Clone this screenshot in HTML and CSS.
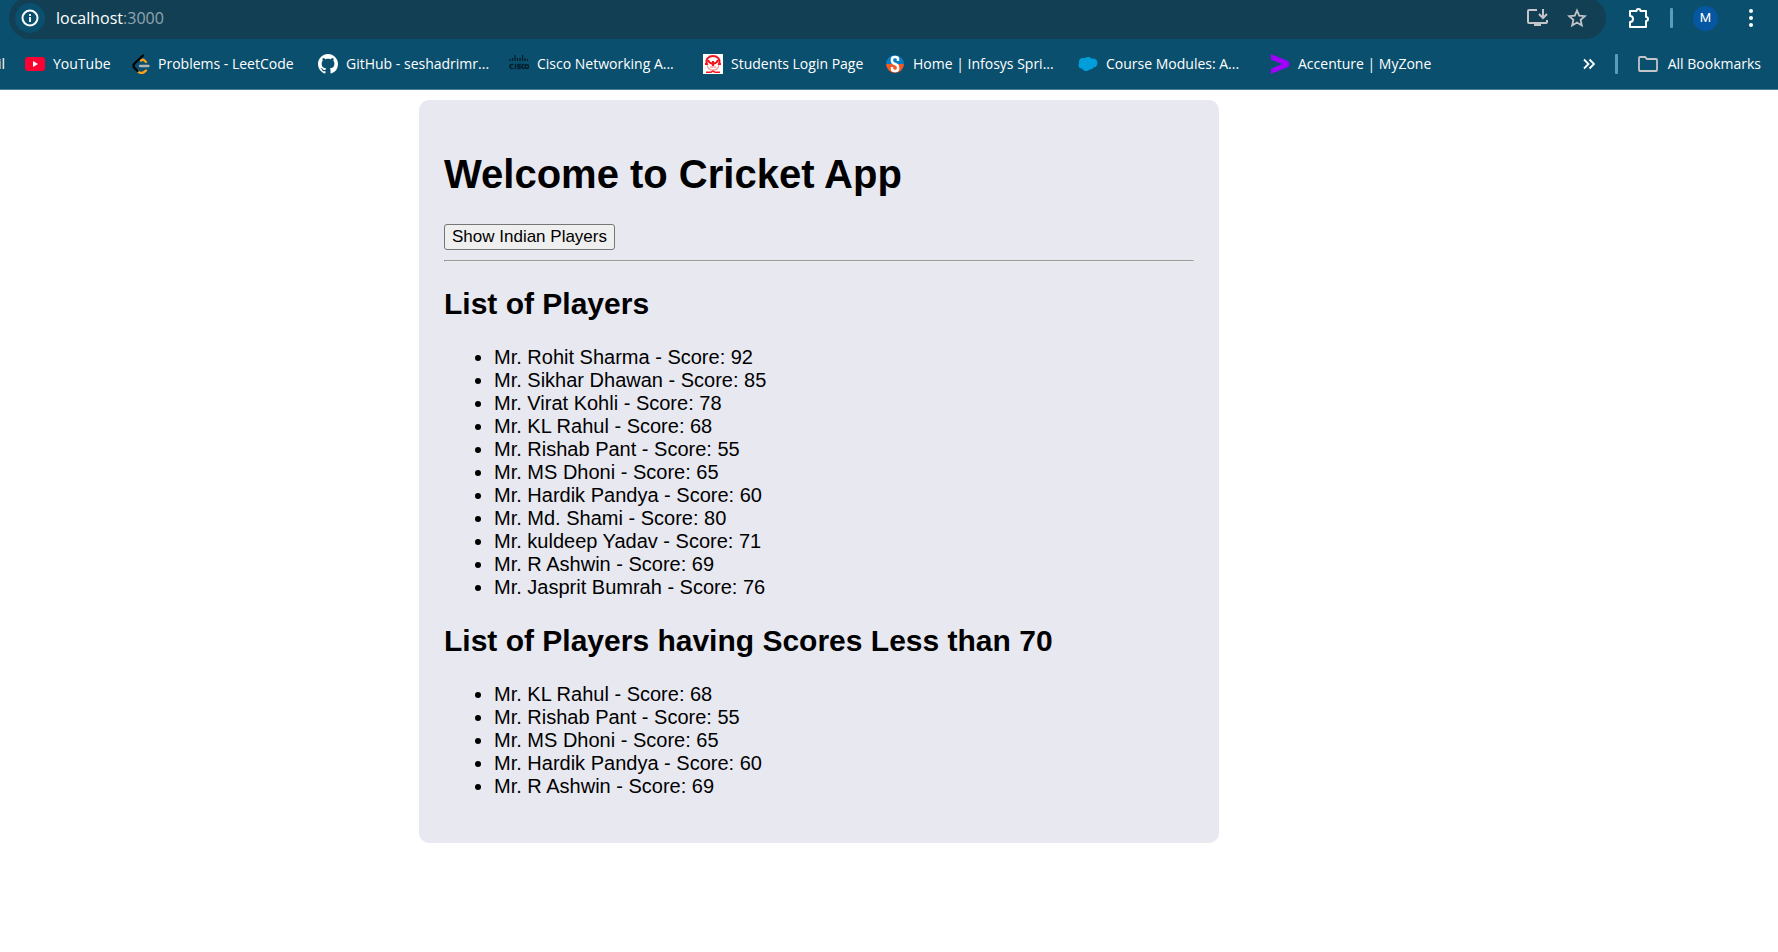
FILE: index.html
```html
<!DOCTYPE html>
<html lang="en">
<head>
<meta charset="utf-8">
<title>Cricket App</title>
<link rel="stylesheet" href="styles.css">
</head>
<body>
<header class="browser">
  <div class="toolbar">
    <div class="address">
      <button class="info" type="button" aria-label="View site information">
        <svg width="18" height="18" viewBox="0 0 18 18" fill="none" stroke="#fff" stroke-width="2"><circle cx="9" cy="9" r="7.5"/><path d="M9 8v5M9 5v2" stroke-width="1.8"/></svg>
      </button>
      <a class="url" href="#">localhost<span class="port">:3000</span></a>
      <button class="plain" type="button" aria-label="Install app">
        <svg width="22" height="20" viewBox="0 0 22 20" fill="none" stroke="#c3c5c8" stroke-width="2"><path d="M11 2H3Q2 2 2 3v11q0 1 1 1h17q1 0 1-1v-2M17 1v9M13 6l4 4 4-4"/><path d="M8 15h7v3H8z" fill="#c3c5c8" stroke="none"/></svg>
      </button>
      <button class="plain" type="button" aria-label="Bookmark this tab">
        <svg width="20" height="20" viewBox="0 0 20 20" fill="none" stroke="#c3c5c8" stroke-width="1.8"><path d="M10 2.5l2.2 5.2 5.6.5-4.2 3.7 1.2 5.5L10 14.500l-4.800 2.900 1.200-5.500L2.200 8.200l5.600-.5z"/></svg>
      </button>
    </div>
    <div class="actions">
      <button class="plain" type="button" aria-label="Extensions">
        <svg width="22" height="22" viewBox="0 0 22 22" fill="none" stroke="#fff" stroke-width="2"><path d="M2 4h6.500a2 2 0 0 1 4 0H18v6a2 2 0 0 1 0 4v6H2v-5a3 3 0 0 0 0-6z" stroke-linejoin="round"/></svg>
      </button>
      <span class="divider"></span>
      <button class="avatar" type="button">M</button>
      <button class="plain menu" type="button" aria-label="Menu">
        <svg width="6" height="20" viewBox="0 0 6 20" fill="#fff"><circle cx="3" cy="3" r="2"/><circle cx="3" cy="10" r="2"/><circle cx="3" cy="17" r="2"/></svg>
      </button>
    </div>
  </div>
  <nav class="bookmarks" aria-label="Bookmarks">
    <a class="cut" href="#">il</a>
    <div class="links">
    <a class="bookmark" href="#"><svg width="20" height="20" viewBox="0 0 20 20"><rect y="3" width="20" height="14" rx="3" fill="#ff0033"/><path d="M8 7l5 3-5 3z" fill="#fff"/></svg>YouTube</a>
    <a class="bookmark" href="#"><svg width="18" height="20" viewBox="0 0 18 20" fill="none" stroke-width="2.300" stroke-linecap="round"><path d="M14 16.500Q10 21 6 17.500" stroke="#ffa116"/><path d="M9 6.500q2-1.500 3.500 0L14 8" stroke="#ffa116"/><path d="M11 1.500L2.500 9.500q-2 2.500 0 4.500l3 3" stroke="#000"/><path d="M8 12H16.500" stroke="#b3b3b3"/></svg>Problems - LeetCode</a>
    <a class="bookmark" href="#"><svg width="20" height="20" viewBox="0 0 16 16" fill="#fff"><path d="M8 0C3.580 0 0 3.580 0 8c0 3.540 2.290 6.530 5.470 7.590.4.070.55-.17.55-.38 0-.19-.01-.82-.01-1.490-2.010.37-2.530-.49-2.690-.94-.09-.23-.48-.94-.82-1.130-.28-.15-.68-.52-.01-.53.63-.01 1.080.58 1.230.82.72 1.210 1.870.87 2.330.66.070-.52.28-.87.51-1.070-1.780-.2-3.640-.89-3.640-3.950 0-.87.31-1.590.82-2.150-.08-.2-.36-1.020.08-2.120 0 0 .67-.21 2.200.82.64-.18 1.320-.27 2-.27s1.360.09 2 .27c1.530-1.040 2.200-.82 2.200-.82.44 1.100.16 1.920.08 2.120.51.56.82 1.270.82 2.150 0 3.070-1.870 3.750-3.650 3.950.29.25.54.73.54 1.480 0 1.070-.01 1.930-.01 2.200 0 .21.15.46.55.38A8.010 8.010 0 0 0 16 8c0-4.420-3.580-8-8-8z"/></svg>GitHub - seshadrimr...</a>
    <a class="bookmark" href="#"><svg width="20" height="20" viewBox="0 0 20 20" fill="none" stroke="#04202f" stroke-width="1.300"><path d="M1 5v2M3.500 4v3M6 1v6M8.500 4v3M11 4v3M13.500 1v6M16 4v3M18.500 5v2"/><path d="M4.500 10.500H3Q1 10.500 1 12.500t2 2h1.500M6.500 10v5M12 10.500H9.500q-1.500 1 0 2h1q1.500 1 0 2H8M15.500 10.500h-1q-1.500 0-1.500 2t1.500 2h1" stroke-width="1.600"/><circle cx="17.800" cy="12.500" r="1.800" stroke-width="1.600"/></svg>Cisco Networking A...</a>
    <a class="bookmark" href="#"><svg width="20" height="20" viewBox="0 0 20 20"><path fill="#fff" d="M0 0h20v20H0z"/><g fill="none" stroke="#f01820"><path d="M2 10h2C2 5 6 2 10 2s8 3 6 8h2" stroke-width="2"/><path d="M5 6q1 3 4 3.500M15 6q-1 3-4 3.500M10 7v5" stroke-width="2.200"/><path d="M4 11q1 5 6 5t6-5M7 13h6" stroke="#f7a6a8" stroke-width="1.300"/><path d="M3 18.200h5l2-1 2 1h5" stroke-width="1.500"/></g></svg>Students Login Page</a>
    <a class="bookmark" href="#"><svg width="20" height="20" viewBox="0 0 20 20"><path d="M1 10a9 9 0 0 1 18 0z" fill="#087cc4"/><path d="M1 10a9 9 0 0 0 18 0z" fill="#f15a24"/><path d="M13 7V5q0-2-3-2T7 5v2q0 2 3 3t3 3v2q0 2-3 2t-3-2v-2" fill="none" stroke="#fff" stroke-width="2.500"/></svg>Home | Infosys Spri...</a>
    <a class="bookmark" href="#"><svg width="20" height="20" viewBox="0 0 20 20" fill="#009edb"><circle cx="5" cy="8" r="4"/><circle cx="10" cy="7" r="4"/><circle cx="15" cy="9" r="4.500"/><circle cx="4" cy="11" r="3.500"/><circle cx="8" cy="13" r="4"/><circle cx="12" cy="12" r="3.500"/></svg>Course Modules: A...</a>
    <a class="bookmark" href="#"><svg width="20" height="20" viewBox="0 0 20 20"><path d="M1 0l18 7.500v5L1 20v-5l11-5L1 5.500z" fill="#a100ff"/></svg>Accenture | MyZone</a>
    </div>
    <button class="plain" type="button" aria-label="More bookmarks">
      <svg width="12" height="12" viewBox="0 0 12 12" fill="none" stroke="#fff" stroke-width="1.800"><path d="M1 1.500L5.500 6 1 10.500M6.500 1.500L11 6l-4.500 4.500"/></svg>
    </button>
    <span class="divider"></span>
    <a class="bookmark all" href="#"><svg width="20" height="16" viewBox="0 0 20 16" fill="none" stroke="#c3c5c8" stroke-width="1.800"><path d="M2 1h5l2 2h9q1 0 1 1v10q0 1-1 1H2q-1 0-1-1V2q0-1 1-1z"/></svg>All Bookmarks</a>
  </nav>
</header>
<main class="page">
  <section class="card">
    <h1>Welcome to Cricket App</h1>
    <button class="toggle" type="button">Show Indian Players</button>
    <hr>
    <h2>List of Players</h2>
    <ul>
      <li>Mr. Rohit Sharma - Score: 92</li>
      <li>Mr. Sikhar Dhawan - Score: 85</li>
      <li>Mr. Virat Kohli - Score: 78</li>
      <li>Mr. KL Rahul - Score: 68</li>
      <li>Mr. Rishab Pant - Score: 55</li>
      <li>Mr. MS Dhoni - Score: 65</li>
      <li>Mr. Hardik Pandya - Score: 60</li>
      <li>Mr. Md. Shami - Score: 80</li>
      <li>Mr. kuldeep Yadav - Score: 71</li>
      <li>Mr. R Ashwin - Score: 69</li>
      <li>Mr. Jasprit Bumrah - Score: 76</li>
    </ul>
    <h2>List of Players having Scores Less than 70</h2>
    <ul>
      <li>Mr. KL Rahul - Score: 68</li>
      <li>Mr. Rishab Pant - Score: 55</li>
      <li>Mr. MS Dhoni - Score: 65</li>
      <li>Mr. Hardik Pandya - Score: 60</li>
      <li>Mr. R Ashwin - Score: 69</li>
    </ul>
  </section>
</main>
</body>
</html>
```

FILE: styles.css
```css
* { box-sizing: border-box; }
body {
  margin: 0;
  background: #fff;
  color: #000;
  font: 20px/23px "Liberation Sans", Arial, sans-serif;
}
svg { display: block; flex: none; }
a { color: inherit; text-decoration: none; }

.browser {
  overflow: hidden;
  background: #0a506e;
  border-bottom: 1px solid #4a7f96;
  color: #fff;
  font: 14px/20px "Open Sans", "Noto Sans", sans-serif;
}
.toolbar {
  display: flex;
  align-items: center;
  gap: 22px;
  height: 42px;
  margin-top: -3px;
  padding: 0 24px 0 9px;
}
.address {
  display: flex;
  flex: 1;
  align-items: center;
  gap: 19px;
  height: 42px;
  padding: 0 19px 0 6px;
  border-radius: 21px;
  background: #133f54;
}
.plain, .info, .avatar {
  display: grid;
  place-items: center;
  padding: 0;
  border: 0;
  background: none;
  color: inherit;
}
.info {
  width: 30px;
  height: 30px;
  border-radius: 50%;
  background: #0a506e;
}
.url { flex: 1; margin-left: -8px; font-size: 16px; }
.port { color: #91a6b0; }
.actions { display: flex; align-items: center; gap: 20px; }
.menu { padding-left: 10px; }
.divider { width: 3px; height: 20px; border-radius: 1px; background: #5b9cbc; }
.avatar {
  width: 25px;
  height: 25px;
  border-radius: 50%;
  background: #0657a2;
  font: 13px/20px Roboto, sans-serif;
}

.bookmarks {
  display: flex;
  align-items: center;
  height: 50px;
  padding-right: 17px;
  white-space: nowrap;
}
.cut { display: flex; justify-content: flex-end; width: 5px; margin-right: 20px; }
.links {
  display: grid;
  flex: 1;
  grid-template-columns: 107px 186px 191px 194px 182px 193px 192px auto;
}
.bookmark { display: flex; align-items: center; gap: 8px; }
.bookmarks .divider { margin: 0 20px; }
.all { gap: 10px; }

.page { padding: 10px 140px 40px 0; }
.card {
  max-width: 800px;
  margin: 0 auto;
  padding: 25px;
  border-radius: 10px;
  background: #e8e8f0;
}
h1 { margin: 26px 0 27px; font-size: 40px; line-height: 46px; }
h2 { margin: 25px 0; font-size: 30px; line-height: 34px; }
hr { margin: 10px 0 25px; }
ul { margin: 25px 0 20px; padding-left: 50px; }
.toggle {
  display: block;
  height: 26px;
  padding: 0 7px;
  border: 1px solid #767676;
  border-radius: 3px;
  background: #efefef;
  color: #000;
  font: 17px/20px "Liberation Sans", Arial, sans-serif;
}
```
